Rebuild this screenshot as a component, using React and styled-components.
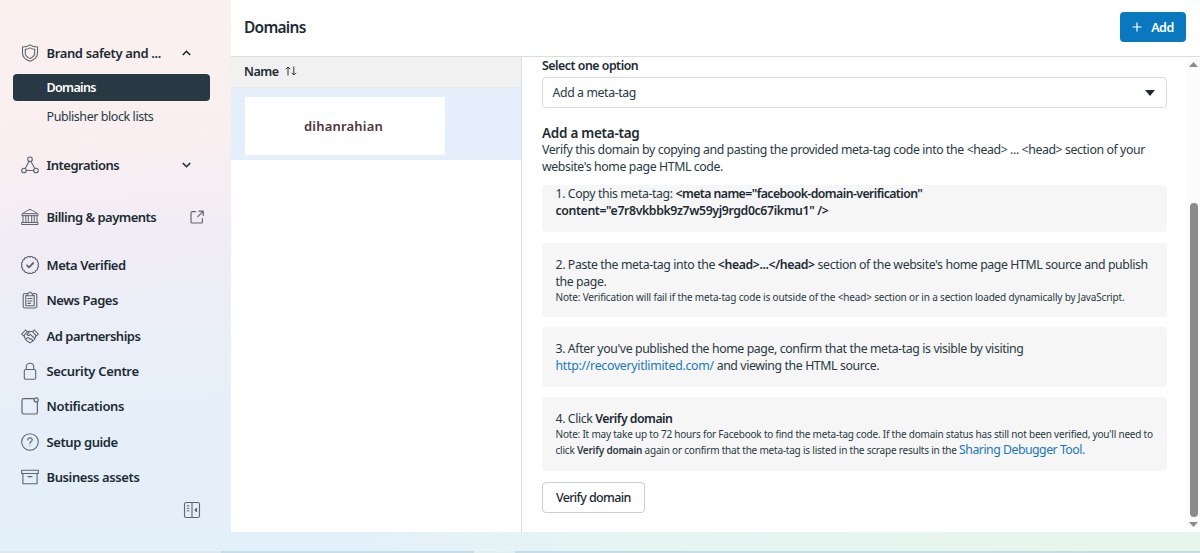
import styled, { createGlobalStyle } from 'styled-components';

/* Palette */
const colors = {
  ink: '#1c2b33',
  text: '#283943',
  icon: '#5d6670',
  active: '#283943',
  blue: '#0a78be',
  link: '#1878ba',
  line: '#dadde1',
  head: '#f1f1f1',
  row: '#e5effc',
  step: '#f6f6f6',
  scroll: '#8b8b8b',
};

const font = "'Noto Sans', 'Open Sans', sans-serif";

const GlobalStyle = createGlobalStyle`
  * {
    box-sizing: border-box;
  }

  body {
    margin: 0;
    overflow: hidden;
    font-family: ${font};
    color: ${colors.text};
  }
`;

/* Page */
const Page = styled.div`
  display: grid;
  grid-template-columns: 230.5px minmax(0, 1fr);
  grid-template-rows: 532px 19px 2px;
  height: 553px;
  background:
    linear-gradient(90deg, #e4f0f9 0 30%, #e6f4f3 50%, #e7f5ec 92%) 0 532px / 100% 21px no-repeat,
    linear-gradient(176deg, #fbf1ef 0%, #faeff0 22%, #f0ecf5 40%, #e8eff9 60%, #e4eff9 70%, #e4f0f9 100%);
`;

const BottomLine = styled.div`
  grid-column: 1 / -1;
  grid-row: 3;
  background: linear-gradient(90deg, #dfe6f0 0 221px, #c5dde6 221px 474px, #e2f0f3 474px 515px, #c5dde6 515px 100%);
`;

/* Sidebar */
const Sidebar = styled.nav`
  display: flex;
  flex-direction: column;
  padding: 35px 20.5px 0 13px;
`;

const NavItem = styled.a`
  display: flex;
  align-items: center;
  flex: none;
  height: 35.4px;
  margin-top: ${(p) => p.$gap || 0}px;
  padding: 0 6px 0 8px;
  color: ${colors.ink};
  font-size: 13px;
  font-weight: 600;
  letter-spacing: ${(p) => p.$spacing || -0.45}px;
  white-space: nowrap;

  svg {
    flex: none;
  }
`;

const NavLabel = styled.span`
  flex: 1;
  margin-left: 7.5px;
`;

const ChevronSlot = styled.span`
  display: flex;
  margin-right: 13px;
`;

const SubMenu = styled.div`
  display: flex;
  flex-direction: column;
  margin-top: 4px;
`;

const SubItem = styled.a`
  display: flex;
  align-items: center;
  flex: none;
  height: ${(p) => (p.$active ? 27 : 31)}px;
  padding-left: 33.5px;
  border-radius: 4px;
  font-size: 12.5px;
  letter-spacing: ${(p) => (p.$active ? -0.65 : -0.43)}px;
  font-weight: ${(p) => (p.$active ? 600 : 400)};
  color: ${(p) => (p.$active ? '#fff' : colors.text)};
  background: ${(p) => (p.$active ? colors.active : 'transparent')};
`;

const Collapse = styled.div`
  display: flex;
  justify-content: flex-end;
  margin-top: 6px;
  padding-right: 9px;
`;

/* Main panel */
const Main = styled.main`
  display: flex;
  flex-direction: column;
  background: #fff;
  min-width: 0;
`;

const Header = styled.header`
  display: flex;
  align-items: center;
  justify-content: space-between;
  flex: none;
  height: 57px;
  padding: 0 14px 2px 13.5px;
  border-bottom: 1px solid ${colors.line};
`;

const Title = styled.h1`
  margin: 0;
  color: ${colors.ink};
  font-size: 15.5px;
  font-weight: 600;
  letter-spacing: -0.75px;
`;

const AddButton = styled.button`
  display: flex;
  align-items: center;
  justify-content: center;
  gap: 9px;
  width: 66px;
  height: 30px;
  padding: 0;
  border: 0;
  border-radius: 4px;
  background: ${colors.blue};
  color: #fff;
  font: 600 12.5px ${font};
  letter-spacing: -0.5px;
`;

const Content = styled.div`
  display: grid;
  grid-template-columns: 290.5px minmax(0, 1fr) 14px;
  flex: 1;
  min-height: 0;
`;

const TableHead = styled.div`
  display: flex;
  align-items: center;
  gap: 6px;
  height: 31px;
  padding: 0 13.5px 2px;
  border-bottom: 1px solid #e6e8ea;
  background: ${colors.head};
  color: ${colors.ink};
  font-size: 12.5px;
  font-weight: 600;
  letter-spacing: -0.5px;
`;

const TableRow = styled.div`
  height: 72px;
  padding: 9px 14.5px;
  background: ${colors.row};
`;

const DomainCard = styled.div`
  display: flex;
  align-items: center;
  justify-content: center;
  width: 200px;
  height: 58px;
  padding-right: 3px;
  background: #fff;
  color: #4f343a;
  font-size: 13px;
  font-weight: 600;
  letter-spacing: 0.2px;
`;

/* Domain details */
const Details = styled.section`
  padding: 0 19px 0 20px;
  border-left: 1px solid ${colors.line};
  font-size: 12.3px;
  line-height: 17px;
  white-space: nowrap;
`;

const Label = styled.div`
  height: 20px;
  color: ${colors.ink};
  font-weight: 600;
  letter-spacing: -0.46px;
`;

const Select = styled.div`
  display: flex;
  align-items: center;
  justify-content: space-between;
  height: 31px;
  padding: 0 11px 0 9.5px;
  border: 1px solid #d8dbe2;
  border-radius: 4px;
`;

const SubTitle = styled.h2`
  margin: 17.5px 0 0;
  color: ${colors.ink};
  font-size: 13.5px;
  font-weight: 600;
  line-height: 15px;
  letter-spacing: -0.27px;
`;

const Line = styled.div`
  letter-spacing: ${(p) => p.$spacing || -0.39}px;

  b {
    color: ${colors.ink};
    font-weight: 600;
    letter-spacing: ${(p) => p.$bold || -0.38}px;
  }
`;

const Step = styled.div`
  height: ${(p) => p.$height}px;
  margin-top: 10.5px;
  padding: ${(p) => (p.$top === undefined ? 13.4 : p.$top)}px 13.5px 0;
  border-radius: 4px;
  background: ${colors.step};
`;

const Note = styled.div`
  font-size: 10px;
  line-height: 15.2px;
  letter-spacing: ${(p) => p.$spacing || -0.21}px;

  b {
    font-weight: 600;
  }
`;

const Link = styled.a`
  color: ${colors.link};
  font-size: 12.3px;
  line-height: 14px;
  letter-spacing: ${(p) => p.$spacing || -0.27}px;
`;

const VerifyButton = styled.button`
  width: 102.5px;
  height: 31px;
  margin-top: 10.5px;
  padding: 0;
  border: 1px solid #c7cfd7;
  border-radius: 4px;
  background: #fff;
  color: ${colors.ink};
  font: 500 12.5px ${font};
  letter-spacing: -0.65px;
`;

/* Scrollbar */
const Scroll = styled.div`
  display: flex;
  flex-direction: column;
  align-items: center;
  padding: 5px 0 5px 1px;
  background: #fcfcfc;
`;

const Thumb = styled.div`
  width: 8px;
  height: 314px;
  margin: auto 0 5px;
  border-radius: 4px;
  background: ${colors.scroll};
`;

/* Icons */
const Icon = ({ size = 18, color = colors.icon, width = 1.1, children }) => (
  <svg width={size} height={size} viewBox="0 0 18 18" fill="none" stroke={color} strokeWidth={width} strokeLinecap="round" strokeLinejoin="round">
    {children}
  </svg>
);

const ShieldIcon = () => (
  <Icon>
    <path d="M9 .9C7 2.300 4.500 3 1.500 3V9c0 4 3 6.700 7.500 8.200C13.500 15.700 16.500 13 16.500 9V3C13.500 3 11 2.300 9 .9z" />
    <path d="M9 3.900C7.500 4.900 6 5.300 4.300 5.400V9c0 2.600 1.800 4.300 4.700 5.400 2.900-1.100 4.700-2.800 4.700-5.400V5.400C12 5.300 10.500 4.900 9 3.900z" />
  </Icon>
);

const NodesIcon = () => (
  <Icon>
    <circle cx="9" cy="3.300" r="2.300" />
    <circle cx="3" cy="14.500" r="2.300" />
    <circle cx="15" cy="14.500" r="2.300" />
    <path d="M8 5.500 4.200 12.400M10 5.500 13.800 12.400M5.300 14.500h7.400" />
  </Icon>
);

const BankIcon = () => (
  <Icon width={1}>
    <path d="M1 7.300V5.800C3.500 4.300 5.500 2.900 9 1.300c3.500 1.600 5.500 3 8 4.500v1.500zM2.500 5.700h13M2 7.300v7M4.800 7.300v7M7.300 7.300v7M10.700 7.300v7M13.200 7.300v7M16 7.300v7M1 14.500h16v2H1z" />
  </Icon>
);

/* Sixteen shallow bumps around a circle */
const badge = (() => {
  const point = (i) => {
    const a = (i * Math.PI) / 8;
    return `${(9 + 7.9 * Math.cos(a)).toFixed(2)} ${(9 + 7.9 * Math.sin(a)).toFixed(2)}`;
  };
  let d = `M${point(0)}`;
  for (let i = 1; i <= 16; i++) d += `A1.75 1.75 0 0 1 ${point(i)}`;
  return `${d}z`;
})();

const VerifiedIcon = () => (
  <Icon>
    <path d={badge} />
    <path d="M6 9.300 8 11.300 12.200 7" strokeWidth="1.800" />
  </Icon>
);

const ClipboardIcon = () => (
  <Icon>
    <path d="M6 2.500H4a1.800 1.800 0 0 0-1.800 1.800v10.900A1.800 1.800 0 0 0 4 17h10a1.800 1.800 0 0 0 1.800-1.800V4.300A1.800 1.800 0 0 0 14 2.500h-2" />
    <path d="M6 4.500H4.800v10.300h8.400V4.500H12" />
    <path d="M6.200 4.700V2.800h1.300c.2-2.500 2.800-2.500 3 0h1.300v1.900zM6.900 7.500h4.200M6.900 10h4.200M6.900 12.400h2.600" />
  </Icon>
);

const HandshakeIcon = () => (
  <Icon>
    <path d="M.7 7.200 4.500 3l2 1.700-3.900 4.200zM17.300 7.200 13.500 3l-2 1.700 3.900 4.200zM6.500 4.700 9 4.300l2.500.4M3.300 8.700C3.500 12 6 14.300 9 15.800c3-1.500 5.500-3.800 5.700-7.100M9 4.300 6 7.600c.8 1.300 2.300 1 3.200-.2l4.600 4.100M5 12.300c1.500-2.500 2.500-2.300 4 0 1-.8 2-.5 2.500 1.200" />
  </Icon>
);

const LockIcon = () => (
  <Icon>
    <rect x="3.300" y="7.500" width="11.400" height="9.700" rx="1.500" />
    <path d="M5.300 7.500V5c0-5 7.400-5 7.400 0v2.500" />
  </Icon>
);

const NotificationIcon = () => (
  <Icon width={1.200}>
    <path d="M12.800 1.700H2.700A1.700 1.700 0 0 0 1 3.400v11.900A1.700 1.700 0 0 0 2.700 17h12a1.700 1.700 0 0 0 1.700-1.700V5.200" />
    <circle cx="15.200" cy="2.900" r="2" />
  </Icon>
);

const HelpIcon = () => (
  <Icon>
    <circle cx="9" cy="9" r="8.300" />
    <path d="M6.800 6.900c.1-2.700 4.400-2.600 4.400 0 0 1.700-2.200 1.600-2.200 3.500M9 12.700v.1" />
  </Icon>
);

const ArchiveIcon = () => (
  <Icon>
    <path d="M.7 2.300h16.600v3.200H.7zM1.900 5.500h14.200v10.300H1.900zM7 8.600h4" />
  </Icon>
);

const ExternalIcon = () => (
  <Icon size={14} width={1.500}>
    <path d="M7 2H3a1.700 1.700 0 0 0-1.700 1.700V15A1.700 1.700 0 0 0 3 16.700h11.300A1.700 1.700 0 0 0 16 15v-4M11.500 1.500H17V7M16.500 2 10 8.500" />
  </Icon>
);

const SidebarIcon = () => (
  <Icon>
    <rect x="1.500" y="1.500" width="15" height="15" rx="1.800" />
    <path d="M9 1.500v15" />
    <path d="M4.200 4.800h1.800M4.200 7.300h1.800M4.200 9.800h1.800" />
    <path d="M13.600 7.500 12 9l1.600 1.500z" fill={colors.icon} />
  </Icon>
);

const Chevron = ({ up }) => (
  <svg width="9" height="6" viewBox="0 0 9 6" fill="none" stroke={colors.ink} strokeWidth="1.600">
    <path d={up ? 'M.8 5 4.500 1.300 8.200 5' : 'M.8 1 4.500 4.700 8.200 1'} />
  </svg>
);

const SortIcon = () => (
  <svg width="12" height="10" viewBox="0 0 12 10" fill="none" stroke={colors.text} strokeWidth="1">
    <path d="M3 9.500V1M.8 3.200 3 1l2.200 2.200M8.800.5V9M6.600 6.800 8.800 9 11 6.800" />
  </svg>
);

const PlusIcon = () => (
  <svg width="10" height="10" viewBox="0 0 10 10" stroke="#fff" strokeWidth="1.200">
    <path d="M5 .5v9M.5 5h9" />
  </svg>
);

const Triangle = ({ up, color = colors.scroll, width = 9, height = 5 }) => (
  <svg width={width} height={height} viewBox="0 0 9 5" preserveAspectRatio="none" fill={color}>
    <path d={up ? 'M0 5 4.500 0 9 5z' : 'M0 0h9L4.500 5z'} />
  </svg>
);

const links = [
  { label: 'Meta Verified', icon: VerifiedIcon, gap: 12 },
  { label: 'News Pages', icon: ClipboardIcon },
  { label: 'Ad partnerships', icon: HandshakeIcon, spacing: -0.5 },
  { label: 'Security Centre', icon: LockIcon, spacing: -0.33 },
  { label: 'Notifications', icon: NotificationIcon, spacing: -0.3 },
  { label: 'Setup guide', icon: HelpIcon, spacing: -0.4 },
  { label: 'Business assets', icon: ArchiveIcon, spacing: -0.39 },
];

function Menu() {
  return (
    <Sidebar>
      <NavItem $spacing={-0.37}>
        <ShieldIcon />
        <NavLabel>Brand safety and ...</NavLabel>
        <ChevronSlot><Chevron up /></ChevronSlot>
      </NavItem>
      <SubMenu>
        <SubItem $active>Domains</SubItem>
        <SubItem>Publisher block lists</SubItem>
      </SubMenu>
      <NavItem $gap={15} $spacing={-0.52}>
        <NodesIcon />
        <NavLabel>Integrations</NavLabel>
        <ChevronSlot><Chevron /></ChevronSlot>
      </NavItem>
      <NavItem $gap={17} $spacing={-0.52}>
        <BankIcon />
        <NavLabel>Billing &amp; payments</NavLabel>
        <ExternalIcon />
      </NavItem>
      {links.map(({ label, icon: ItemIcon, gap, spacing }) => (
        <NavItem key={label} $gap={gap} $spacing={spacing}>
          <ItemIcon />
          <NavLabel>{label}</NavLabel>
        </NavItem>
      ))}
      <Collapse>
        <SidebarIcon />
      </Collapse>
    </Sidebar>
  );
}

function DomainDetails() {
  return (
    <Details>
      <Label>Select one option</Label>
      <Select>
        <Line>Add a meta-tag</Line>
        <Triangle color={colors.ink} width={10} height={6} />
      </Select>
      <SubTitle>Add a meta-tag</SubTitle>
      <Line $spacing={-0.4}>Verify this domain by copying and pasting the provided meta-tag code into the &lt;head&gt; ... &lt;head&gt; section of your</Line>
      <Line>website's home page HTML code.</Line>
      <Step $height={47} $top={0}>
        <Line $bold={-0.57}>1. Copy this meta-tag: <b>&lt;meta name="facebook-domain-verification"</b></Line>
        <Line><b>content="e7r8vkbbk9z7w59yj9rgd0c67ikmu1" /&gt;</b></Line>
      </Step>
      <Step $height={74}>
        <Line>2. Paste the meta-tag into the <b>&lt;head&gt;...&lt;/head&gt;</b> section of the website's home page HTML source and publish</Line>
        <Line>the page.</Line>
        <Note $spacing={-0.17}>Note: Verification will fail if the meta-tag code is outside of the &lt;head&gt; section or in a section loaded dynamically by JavaScript.</Note>
      </Step>
      <Step $height={59.6}>
        <Line>3. After you've published the home page, confirm that the meta-tag is visible by visiting</Line>
        <Line><Link>http://recoveryitlimited.com/</Link> and viewing the HTML source.</Line>
      </Step>
      <Step $height={74}>
        <Line $bold={-0.5}>4. Click <b>Verify domain</b></Line>
        <Note>Note: It may take up to 72 hours for Facebook to find the meta-tag code. If the domain status has still not been verified, you'll need to</Note>
        <Note>click <b>Verify domain</b> again or confirm that the meta-tag is listed in the scrape results in the <Link $spacing={-0.5}>Sharing Debugger Tool.</Link></Note>
      </Step>
      <VerifyButton>Verify domain</VerifyButton>
    </Details>
  );
}

export default function App() {
  return (
    <Page>
      <GlobalStyle />
      <Menu />
      <Main>
        <Header>
          <Title>Domains</Title>
          <AddButton>
            <PlusIcon />
            Add
          </AddButton>
        </Header>
        <Content>
          <div>
            <TableHead>
              Name
              <SortIcon />
            </TableHead>
            <TableRow>
              <DomainCard>dihanrahian</DomainCard>
            </TableRow>
          </div>
          <DomainDetails />
          <Scroll>
            <Triangle up />
            <Thumb />
            <Triangle />
          </Scroll>
        </Content>
      </Main>
      <BottomLine />
    </Page>
  );
}
